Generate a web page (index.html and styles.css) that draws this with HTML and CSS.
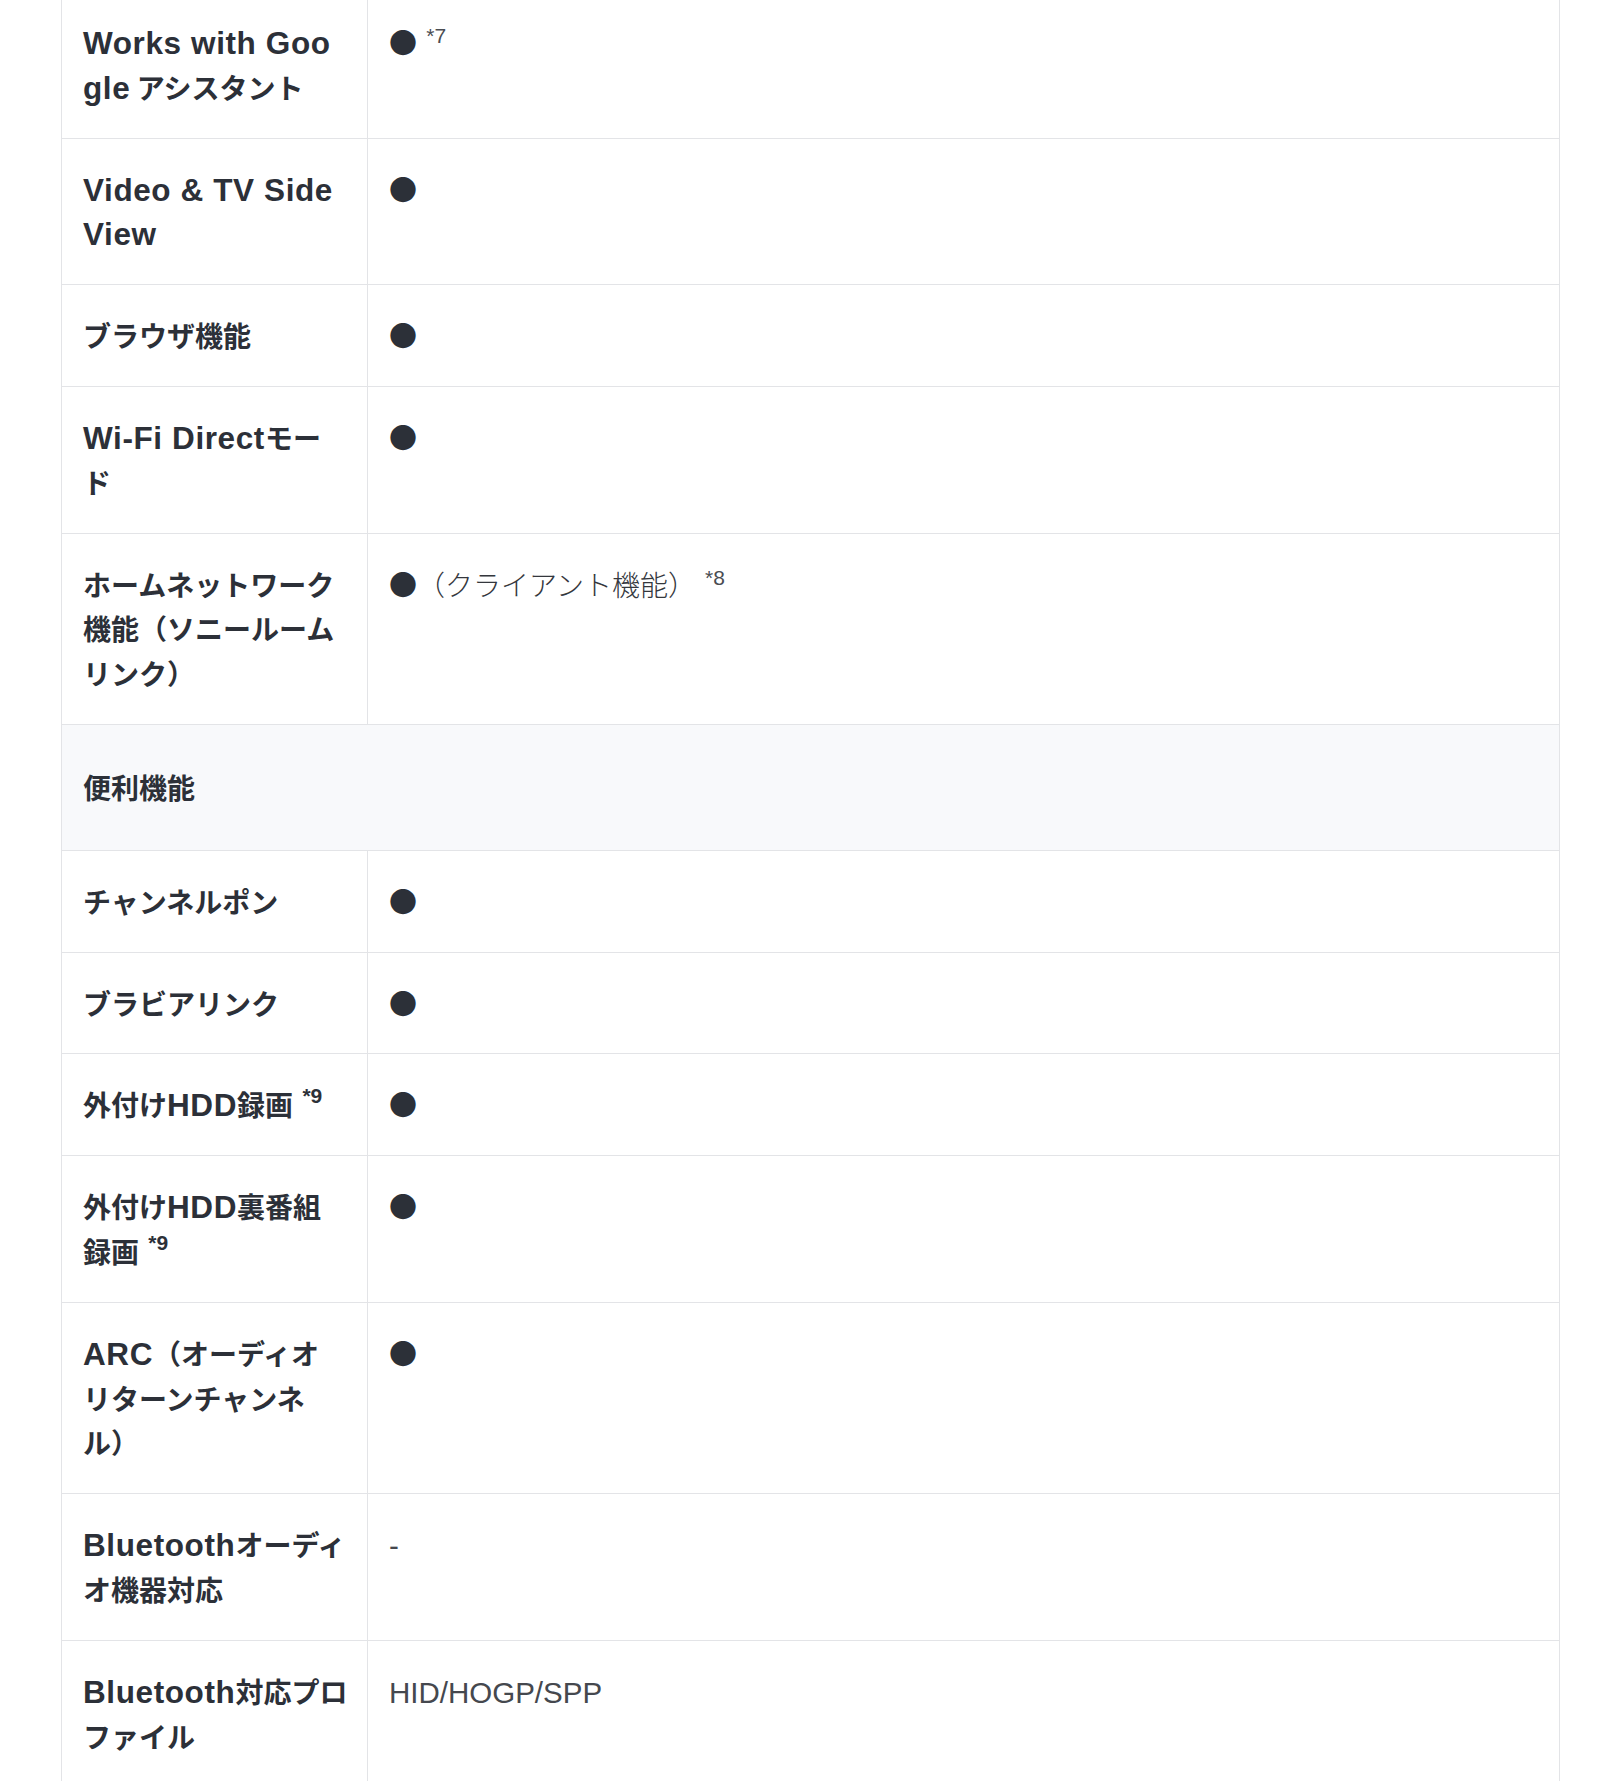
FILE: index.html
```html
<!DOCTYPE html>
<html lang="ja">
<head>
<meta charset="utf-8">
<title>仕様</title>
<link rel="stylesheet" href="styles.css">
</head>
<body>
<div class="spec">
<table class="spec-table">
<tbody>
<tr><th><span class="en">Works with Goo</span><br><span class="en">gle</span> アシスタント</th><td><span class="dot">●</span> <sup class="note">*7</sup></td></tr>
<tr><th><span class="en">Video &amp; TV Side</span><br><span class="en">View</span></th><td><span class="dot">●</span></td></tr>
<tr><th>ブラウザ機能</th><td><span class="dot">●</span></td></tr>
<tr><th><span class="en">Wi-Fi Direct</span>モー<br>ド</th><td><span class="dot">●</span></td></tr>
<tr><th>ホームネットワーク<br>機能（ソニールーム<br>リンク）</th><td><span class="dot">●</span>（クライアント機能） <sup class="note">*8</sup></td></tr>
<tr class="section"><th colspan="2">便利機能</th></tr>
<tr><th>チャンネルポン</th><td><span class="dot">●</span></td></tr>
<tr><th>ブラビアリンク</th><td><span class="dot">●</span></td></tr>
<tr><th>外付け<span class="en">HDD</span>録画 <sup class="note note-bold">*9</sup></th><td><span class="dot">●</span></td></tr>
<tr><th>外付け<span class="en">HDD</span>裏番組<br>録画 <sup class="note note-bold">*9</sup></th><td><span class="dot">●</span></td></tr>
<tr><th><span class="en">ARC</span>（オーディオ<br>リターンチャンネ<br>ル）</th><td><span class="dot">●</span></td></tr>
<tr><th><span class="en">Bluetooth</span>オーディ<br>オ機器対応</th><td><span class="en-light">-</span></td></tr>
<tr><th><span class="en">Bluetooth</span>対応プロ<br>ファイル</th><td><span class="en-light">HID/HOGP/SPP</span></td></tr>
</tbody>
</table>
</div>
</body>
</html>
```
FILE: styles.css
```css
html, body {
  margin: 0;
  padding: 0;
  background: #ffffff;
}

body {
  font-family: "Noto Sans CJK JP", "Noto Sans", sans-serif;
  color: #2c3038;
}

.spec {
  padding: 0 60px 0 61px;
  overflow: hidden;
}

.spec-table {
  width: 100%;
  margin-top: -9px;
  border-collapse: collapse;
  table-layout: fixed;
  font-size: 28px;
  line-height: 44.8px;
}

.spec-table th,
.spec-table td {
  border: 1px solid #e3e4e7;
  padding: 28px 21px;
  vertical-align: top;
  text-align: left;
}

.spec-table th {
  width: 263px;
  font-weight: 700;
  white-space: nowrap;
}

.spec-table td {
  font-weight: 300;
  color: #34373d;
}

.spec-table .section th {
  background: #f8f9fb;
  padding: 40px 21px;
  width: auto;
}

.en {
  font-family: "Liberation Sans", Arial, sans-serif;
  font-size: 31.5px;
  line-height: 1;
  font-weight: 700;
  letter-spacing: 0.6px;
}

.en-light {
  font-family: "Liberation Sans", Arial, sans-serif;
  font-size: 29.5px;
  line-height: 1;
  font-weight: 400;
  color: #45484e;
}

.dot {
  color: #2c3038;
  font-weight: 400;
}

.note {
  font-family: "Liberation Sans", Arial, sans-serif;
  font-size: 21px;
  line-height: 0;
  vertical-align: 11px;
  font-weight: 400;
  color: #4a4d52;
  margin-left: 3px;
}

.note-bold {
  font-weight: 700;
  color: #2c3038;
  vertical-align: 13px;
}
```
